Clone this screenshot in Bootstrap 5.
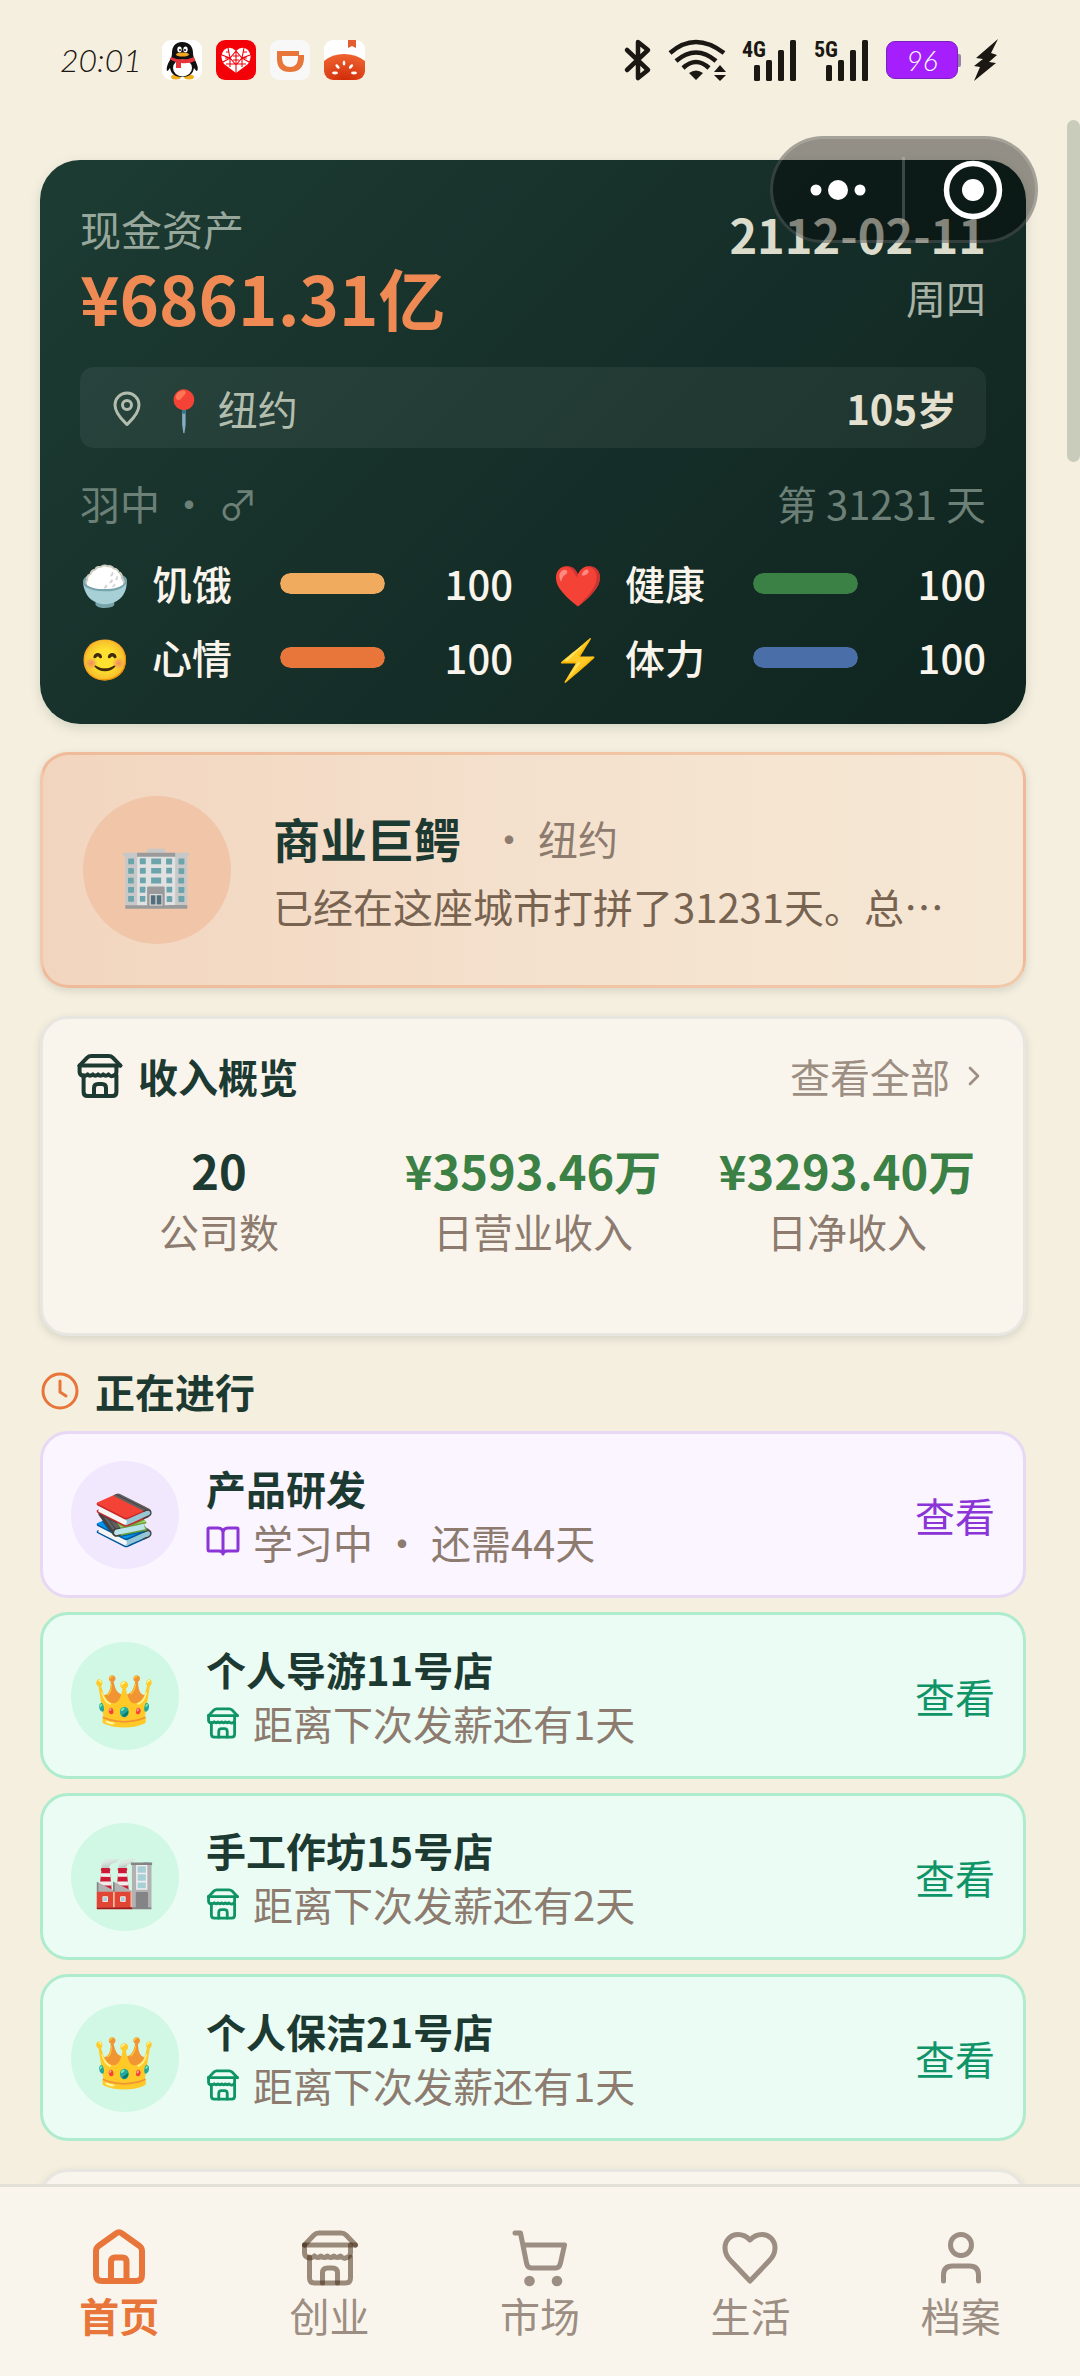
<!DOCTYPE html>
<html lang="zh-CN">
<head>
<meta charset="utf-8">
<meta name="viewport" content="width=device-width, initial-scale=1">
<title>首页</title>
<link href="https://cdn.jsdelivr.net/npm/bootstrap@5.3.0/dist/css/bootstrap.min.css" rel="stylesheet">
<style>
:root{--ink:#1d3a32;--orange:#e8763a;--taupe:#8c7b6e;--soft:#9c8e82;--paper:#faf5ec;--edge:#e8e6e1}
body{background:#f5efdf;color:var(--ink);font-family:"Noto Sans CJK SC","Noto Color Emoji",sans-serif;font-size:40px;line-height:54px}
svg{display:block;flex:none;overflow:visible}
.line-art{fill:none;stroke:currentColor;stroke-linecap:round;stroke-linejoin:round}
a{color:inherit;text-decoration:none}
.status-bar{height:120px;padding:0 82px 0 60px;color:#1b1712}
.clock-text{font:italic 300 32px/80px Lato,sans-serif;width:102px}
.app-icons{gap:14px}
.signal-icons{gap:16px}
.carrier{font:700 22px "Liberation Sans Narrow","Roboto Condensed",Roboto,sans-serif}
.battery{width:72px;height:38px;border-radius:9px;background:#a41ffb;color:#fff;font:italic 300 28px/36px Lato,sans-serif;border:1px solid #7b1fc0;position:relative}
.battery::after{content:"";position:absolute;right:-4px;top:12px;width:3px;height:13px;border-radius:0 2px 2px 0;background:#9a7fb0}
.feed{padding:40px 54px 0 40px;min-height:0}
.scroll-thumb{right:0;top:120px;width:13px;height:342px;border-radius:7px;background:#c9ccbb}
.capsule{top:136px;right:42px;width:268px;height:107px;border-radius:54px;background:rgba(0,0,0,.4);border:3px solid rgba(255,255,255,.16);z-index:5}
.capsule button{background:none;border:0;padding:0;height:100%}
.capsule .close-btn{padding-left:6px}
.capsule .split{width:3px;height:66px;background:rgba(255,255,255,.2)}
.hero{border-radius:40px;padding:40px;height:564px;background:linear-gradient(135deg,#1c3c33,#17302a 45%,#0f241f);color:#faf5ec;box-shadow:0 4px 12px rgba(29,58,50,.15)}
.hero-label{color:#97a79b;font-size:41px;line-height:56px}
.money{font-size:67px;line-height:82px;font-weight:700;color:#f08a54}
.game-date{font-size:47px;line-height:68px;font-weight:700;color:#dbdccb}
.weekday{line-height:58px;color:#a9b3a5}
.place{height:81px;border-radius:14px;padding:0 29px;background:rgba(255,255,255,.06);color:#b3bdae;gap:14px;margin-top:29px}
.age{color:#e3e0d0;font-weight:700}
.who{margin-top:28px;color:#6c8077}
.stats{margin-top:26px;display:grid;grid-template-columns:1fr 1fr;gap:20px 40px}
.stat{font-weight:500}
.stat .face{width:72px}
.stat .tag{width:128px}
.stat .progress{flex:1;height:21px;border-radius:11px;background:rgba(255,255,255,.1)}
.stat .progress-bar{border-radius:11px}
.stat .num{width:128px;text-align:right}
.panel{border-radius:28px;border:3px solid var(--edge);background:var(--paper);margin-top:28px;box-shadow:0 3px 8px rgba(29,58,50,.14)}
.profile{border-color:rgba(232,118,58,.28);background:linear-gradient(90deg,#f2d5bf,#f4e1cd 50%,#f5e8d5);height:236px;padding:0 40px;gap:42px}
.avatar{width:148px;height:148px;border-radius:50%;background:#f0c5a8;font-size:60px;flex:none}
.job{font-size:47px;line-height:66px;font-weight:700}
.city{color:var(--taupe);margin-left:28px}
.bio{color:#776350;line-height:58px;margin-top:6px}
.income{height:320px;padding:33px}
.income-head{height:48px;gap:14px}
.income-grid{display:grid;grid-template-columns:repeat(3,1fr);column-gap:28px;margin-top:38px;text-align:center}
.figure-num{font-size:47px;line-height:64px;font-weight:700;white-space:nowrap;color:#3b8045}
.figure-num.plain{color:var(--ink)}
.figure-cap{color:var(--taupe);line-height:58px}
.more{color:var(--soft)}
.section-head{margin:28px 0 0;gap:15px;font-size:40px;line-height:54px;font-weight:700;color:var(--ink)}
.section-head svg{color:var(--orange)}
.tasks{margin-top:13px;gap:14px}
.task{height:167px;border-radius:28px;border:3px solid #aeeccd;background:#ebfcf4;padding:0 28px;gap:27px;--tone:#0f9468;--halo:#d1f8e5}
.task.study{border-color:#e7d9f6;background:#faf5ff;--tone:#8b35d6;--halo:#f2e8fe}
.task-face{width:108px;height:108px;border-radius:50%;background:var(--halo);font-size:50px;flex:none}
.tone{color:var(--tone)}
.task-name{font-weight:700}
.task-note{color:var(--taupe);gap:13px}
.next-panel{height:100px}
.tabbar{height:192px;border-top:3px solid #e3e0d8;background:var(--paper);padding:41px 14px 0;position:relative;z-index:3}
.tabbar a{flex:1;color:var(--soft);line-height:50px;gap:2px}
.tabbar a.active{color:var(--orange);font-weight:700}
.shop-tab{color:rgba(75,50,30,.55)}
</style>
<script src="https://cdn.jsdelivr.net/npm/bootstrap@5.3.0/dist/js/bootstrap.bundle.min.js"></script>
</head>
<body>
<svg width="0" height="0" class="position-absolute" aria-hidden="true">
  <symbol id="shop" viewBox="0 0 60 60"><path d="M4.500 17 14 7q2-2 5-2h22q3 0 5 2l9.500 10"/><path d="M4.500 17h51"/><path d="M4.500 17v8q0 4 5 5 3 0 5-2 3 3 6.500 0 3 3 6.500 0 3 3 6.500 0 3 3 6.500 0 3 3 5 2 5-1 5-5v-8"/><path d="M9.500 29v21q0 5 5 5h31q5 0 5-5V29"/><path d="M22.500 55V45q0-5 5-5h5q5 0 5 5v10"/></symbol>
</svg>
<div class="vh-100 d-flex flex-column overflow-hidden position-relative">
  <header class="status-bar d-flex justify-content-between align-items-stretch flex-shrink-0">
    <div class="d-flex align-items-center">
      <span class="clock-text">20:01</span>
      <span class="app-icons d-flex">
        <svg width="40" height="40" viewBox="0 0 40 40"><rect width="40" height="40" rx="9" fill="#fff"/><ellipse cx="14" cy="37" rx="5" ry="2.500" fill="#f2b01e"/><ellipse cx="27" cy="37" rx="5" ry="2.500" fill="#f2b01e"/><path d="M20 2c8 0 11 5 11 11 0 3 1 5 2 7 2 4 4 9 2 11-1 0-2-2-3-3-1 6-5 9-12 9S9 34 8 28c-1 1-2 3-3 3-1-3 1-8 3-11 1-2 2-4 2-7 0-6 3-11 10-11z" fill="#111"/><ellipse cx="20.500" cy="28" rx="9.500" ry="8.500" fill="#fff"/><ellipse cx="17.500" cy="9.500" rx="2.200" ry="3" fill="#fff"/><ellipse cx="23.500" cy="9.500" rx="2.200" ry="3" fill="#fff"/><circle cx="18" cy="10" r="1" fill="#111"/><circle cx="23" cy="10" r="1" fill="#111"/><ellipse cx="20.500" cy="14.500" rx="6.500" ry="2" fill="#f2a71e"/><path d="M9 17q11 5 23 0l1 4q-6 3-14 2v5h-5v-6q-4-1-6-3z" fill="#e5343a"/></svg>
        <svg width="40" height="40" viewBox="0 0 40 40"><rect width="40" height="40" rx="9" fill="#f40009"/><path d="M20 33 8 24Q3 16 8 10q6-5 12 1 6-6 12-1 5 6 0 14z" fill="#fff"/><path d="M20 11v22M6 15l8 3 6-7 6 7 8-3M7 22l7-4 6 7 6-7 7 4M12 8l2 10v9M28 8l-2 10v9M10 12l3 0M27 12h4M9 18h3M28 18h3M17 20h6M17 16h6M10 24l20 0" fill="none" stroke="#f40009" stroke-width="1.100"/></svg>
        <svg width="40" height="40" viewBox="0 0 40 40"><rect width="40" height="40" rx="9" fill="#f9f8f8"/><path d="M7 11h22v4h5v4q-1 13-14 13T7 19z" fill="#e8763a"/><path d="M12 16h16v3q-1 8-8 8t-8-8z" fill="#f9f8f8"/></svg>
        <svg width="41" height="40" viewBox="0 0 41 40"><defs><radialGradient id="tom" cx=".5" cy="1" r="1"><stop offset="0" stop-color="#d02a08"/><stop offset="1" stop-color="#ef6430"/></radialGradient><clipPath id="tc"><rect width="41" height="40" rx="9"/></clipPath></defs><g clip-path="url(#tc)"><path d="M0 0h41v40H0z" fill="#fff"/><path d="M24 0h8v8l-4-2-4 2z" fill="#e25c34"/><path d="M0 21Q8 14 20 14t21 7v19H0z" fill="url(#tom)"/></g><g fill="#fff"><ellipse cx="20" cy="23" rx="1.300" ry="2.500"/><ellipse cx="13.500" cy="26.500" rx="1.400" ry="2.700" transform="rotate(-42 13.500 26.500)"/><ellipse cx="27" cy="26.500" rx="1.400" ry="2.700" transform="rotate(42 27 26.500)"/><ellipse cx="11" cy="33" rx="3" ry="1.400"/><ellipse cx="30" cy="33" rx="3" ry="1.400"/></g></svg>
      </span>
    </div>
    <div class="signal-icons d-flex align-items-center">
      <svg width="28" height="42" viewBox="0 0 28 42" class="line-art" stroke-width="4.500"><path d="M3 11 24 31 14 39V3l10 8L3 31"/></svg>
      <svg width="58" height="42" viewBox="0 0 58 42"><g fill="none" stroke="#1b1712" stroke-width="4.500"><path d="M2 14q25-22 54 0M8 22q20-17 40 0M15 29q13-12 26 0"/></g><path d="M21 34q7-5 14 0l-7 7z" fill="#1b1712"/><path d="M46 33l6-7 6 7zM46 36h12l-6 6z" fill="#1b1712"/></svg>
      <svg width="56" height="42" viewBox="0 0 56 42"><g fill="#1b1712"><rect x="12" y="26" width="6" height="16" rx="1.500"/><rect x="24" y="21" width="6" height="21" rx="1.500"/><rect x="36" y="11" width="6" height="31" rx="1.500"/><rect x="48" y="1" width="6" height="41" rx="1.500"/><text x="0" y="18" class="carrier">4G</text></g></svg>
      <svg width="56" height="42" viewBox="0 0 56 42"><g fill="#1b1712"><rect x="12" y="26" width="6" height="16" rx="1.500"/><rect x="24" y="21" width="6" height="21" rx="1.500"/><rect x="36" y="11" width="6" height="31" rx="1.500"/><rect x="48" y="1" width="6" height="41" rx="1.500"/><text x="0" y="18" class="carrier">5G</text></g></svg>
      <span class="battery text-center">96</span>
      <svg width="24" height="42" viewBox="0 0 24 42"><path d="M24 0 2 19l7 1-9 7 6 1-6 14 22-18-7-1 8-7-6-2z" fill="#1b1712"/></svg>
    </div>
  </header>

  <div class="capsule position-absolute d-flex align-items-center">
    <button type="button" class="w-50" aria-label="更多"><svg class="mx-auto" width="58" height="20" viewBox="0 0 58 20" fill="#fff"><circle cx="7" cy="10" r="5.500"/><circle cx="29" cy="10" r="10"/><circle cx="51" cy="10" r="5.500"/></svg></button>
    <span class="split"></span>
    <button type="button" class="w-50 close-btn" aria-label="关闭"><svg class="mx-auto" width="60" height="60" viewBox="0 0 60 60"><circle cx="30" cy="30" r="26.500" fill="none" stroke="#fff" stroke-width="5.500"/><circle cx="30" cy="30" r="11" fill="#fff"/></svg></button>
  </div>
  <div class="scroll-thumb position-absolute"></div>

  <main class="feed flex-grow-1 overflow-hidden">
    <section class="hero">
      <div class="d-flex justify-content-between">
        <div><div class="hero-label">现金资产</div><div class="money">¥6861.31亿</div></div>
        <div class="text-end"><div class="game-date">2112-02-11</div><div class="weekday">周四</div></div>
      </div>
      <div class="place d-flex align-items-center">
        <svg width="36" height="40" viewBox="0 0 24 26" class="line-art" stroke-width="2"><path d="M20 11c0 6-6 11-8 13-2-2-8-7-8-13a8 8 0 0 1 16 0z"/><circle cx="12" cy="11" r="3"/></svg>
        <span>📍 纽约</span>
        <span class="age ms-auto">105岁</span>
      </div>
      <div class="who d-flex justify-content-between"><span>羽中 • ♂</span><span>第 31231 天</span></div>
      <div class="stats">
        <div class="stat d-flex align-items-center"><span class="face">🍚</span><span class="tag">饥饿</span><div class="progress"><div class="progress-bar" style="width:100%;background:#f0ab5e"></div></div><span class="num">100</span></div>
        <div class="stat d-flex align-items-center"><span class="face">❤️</span><span class="tag">健康</span><div class="progress"><div class="progress-bar" style="width:100%;background:#3b8045"></div></div><span class="num">100</span></div>
        <div class="stat d-flex align-items-center"><span class="face">😊</span><span class="tag">心情</span><div class="progress"><div class="progress-bar" style="width:100%;background:#e8763a"></div></div><span class="num">100</span></div>
        <div class="stat d-flex align-items-center"><span class="face">⚡</span><span class="tag">体力</span><div class="progress"><div class="progress-bar" style="width:100%;background:#4a6fa8"></div></div><span class="num">100</span></div>
      </div>
    </section>

    <section class="panel profile d-flex align-items-center">
      <div class="avatar d-flex align-items-center justify-content-center">🏢</div>
      <div class="text-nowrap">
        <div class="d-flex align-items-center"><span class="job">商业巨鳄</span><span class="city">• 纽约</span></div>
        <div class="bio">已经在这座城市打拼了31231天。总…</div>
      </div>
    </section>

    <section class="panel income">
      <div class="income-head d-flex align-items-center">
        <svg width="48" height="48" class="line-art" stroke-width="5"><use href="#shop"/></svg>
        <span class="fw-bold">收入概览</span>
        <a href="#" class="more ms-auto d-flex align-items-center gap-2">查看全部<svg width="32" height="32" viewBox="0 0 24 24" class="line-art" stroke-width="2"><path d="m9 18 6-6-6-6"/></svg></a>
      </div>
      <div class="income-grid">
        <div><div class="figure-num plain">20</div><div class="figure-cap">公司数</div></div>
        <div><div class="figure-num">¥3593.46万</div><div class="figure-cap">日营业收入</div></div>
        <div><div class="figure-num">¥3293.40万</div><div class="figure-cap">日净收入</div></div>
      </div>
    </section>

    <h2 class="section-head d-flex align-items-center"><svg width="40" height="40" viewBox="0 0 40 40" class="line-art" stroke-width="3"><circle cx="20" cy="20" r="17"/><path d="M20 10v11l6 4"/></svg>正在进行</h2>

    <div class="tasks d-flex flex-column">
      <article class="task study d-flex align-items-center">
        <div class="task-face d-flex align-items-center justify-content-center">📚</div>
        <div><div class="task-name">产品研发</div><div class="task-note d-flex align-items-center"><svg width="34" height="34" viewBox="0 0 34 34" class="line-art tone" stroke-width="3"><path d="M17 8q0-5-5-5H3q-1 0-1 1v20q0 2 1 2h10q4 0 4 3 0-3 4-3h10q1 0 1-2V4q0-1-1-1h-9q-5 0-5 5zv21"/></svg><span>学习中 • 还需44天</span></div></div>
        <a href="#" class="tone ms-auto">查看</a>
      </article>
      <article class="task d-flex align-items-center">
        <div class="task-face d-flex align-items-center justify-content-center">👑</div>
        <div><div class="task-name">个人导游11号店</div><div class="task-note d-flex align-items-center"><svg width="34" height="34" class="line-art tone" stroke-width="5"><use href="#shop"/></svg><span>距离下次发薪还有1天</span></div></div>
        <a href="#" class="tone ms-auto">查看</a>
      </article>
      <article class="task d-flex align-items-center">
        <div class="task-face d-flex align-items-center justify-content-center">🏭</div>
        <div><div class="task-name">手工作坊15号店</div><div class="task-note d-flex align-items-center"><svg width="34" height="34" class="line-art tone" stroke-width="5"><use href="#shop"/></svg><span>距离下次发薪还有2天</span></div></div>
        <a href="#" class="tone ms-auto">查看</a>
      </article>
      <article class="task d-flex align-items-center">
        <div class="task-face d-flex align-items-center justify-content-center">👑</div>
        <div><div class="task-name">个人保洁21号店</div><div class="task-note d-flex align-items-center"><svg width="34" height="34" class="line-art tone" stroke-width="5"><use href="#shop"/></svg><span>距离下次发薪还有1天</span></div></div>
        <a href="#" class="tone ms-auto">查看</a>
      </article>
    </div>
    <section class="panel next-panel"></section>
  </main>

  <nav class="tabbar d-flex flex-shrink-0">
    <a href="#" class="active d-flex flex-column align-items-center"><svg width="60" height="60" viewBox="0 0 60 60" class="line-art" stroke-width="6"><path d="M27 5.500q3-2.500 6 0L50.500 18q2.500 2 2.500 5v24q0 6-6 6H13q-6 0-6-6V23q0-3 2.500-5z"/><path d="M22 53V34q0-4.500 4-4.500h7.500q4 0 4 4.500v19"/></svg>首页</a>
    <a href="#" class="d-flex flex-column align-items-center"><svg width="60" height="60" class="line-art shop-tab" stroke-width="5"><use href="#shop"/></svg>创业</a>
    <a href="#" class="d-flex flex-column align-items-center"><svg width="60" height="60" viewBox="0 0 60 60" class="line-art" stroke-width="5"><path d="M5 5h5.500l6 30q1 5 5 5h24q4 0 5-5l4-18H13"/><g fill="currentColor" stroke="none"><circle cx="19.500" cy="53" r="5.300"/><circle cx="47" cy="53" r="5.300"/></g></svg>市场</a>
    <a href="#" class="d-flex flex-column align-items-center"><svg width="60" height="60" viewBox="0 0 60 60" class="line-art" stroke-width="5"><path d="M30 53 11 33C7 29 5 25 5 20 5 12 11 6.500 18 6.500q7 0 12 5.500 5-5.500 12-5.500c7 0 13 5.500 13 13.500 0 5-2 9-6 13z"/></svg>生活</a>
    <a href="#" class="d-flex flex-column align-items-center"><svg width="60" height="60" viewBox="0 0 60 60" class="line-art" stroke-width="5"><circle cx="30" cy="17" r="10.500"/><path d="M12.500 53v-6q0-9 9-9h17q9 0 9 9v6"/></svg>档案</a>
  </nav>
</div>
</body>
</html>
